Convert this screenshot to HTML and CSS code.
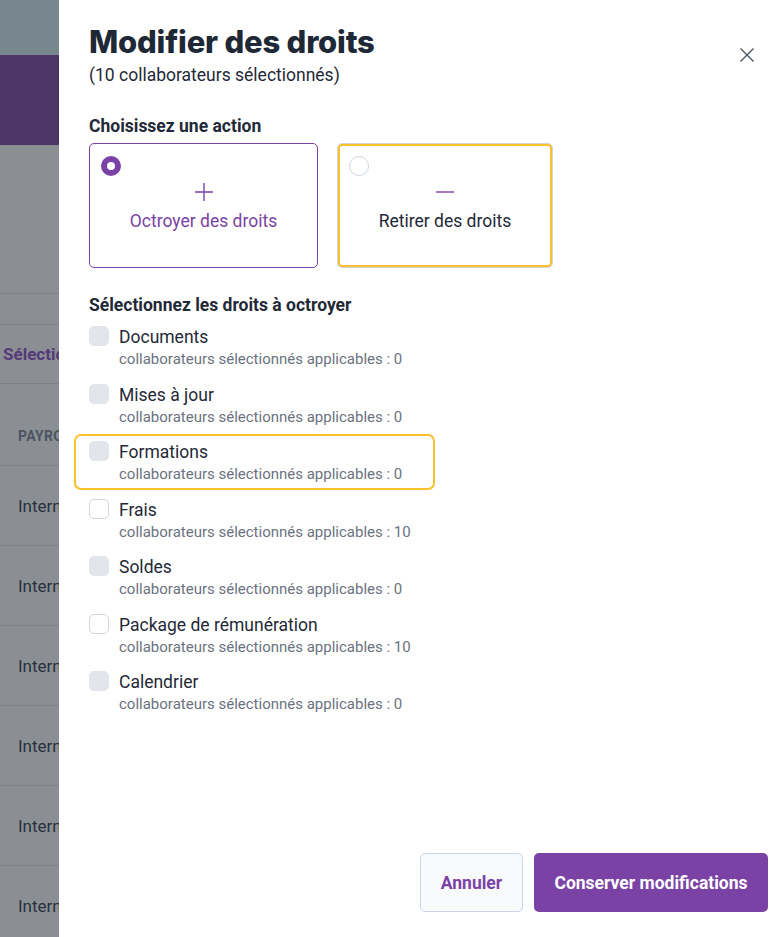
FILE: index.html
```html
<!DOCTYPE html>
<html lang="fr">
<head>
  <meta charset="UTF-8">
  <meta name="viewport" content="width=device-width, initial-scale=1.0">
  <title>Modifier des droits</title>
  <link rel="stylesheet" href="styles.css">
</head>
<body>
  <div class="app">
    <!-- page behind the drawer, dimmed by the overlay -->
    <div class="backdrop">
      <div class="bd-topbar"></div>
      <div class="bd-banner"></div>
      <div class="bd-blank"></div>
      <div class="bd-row bd-thin"></div>
      <div class="bd-row bd-select">Sélectionner</div>
      <div class="bd-row bd-head">PAYROLL</div>
      <div class="bd-row bd-cell">Interne</div>
      <div class="bd-row bd-cell">Interne</div>
      <div class="bd-row bd-cell">Interne</div>
      <div class="bd-row bd-cell">Interne</div>
      <div class="bd-row bd-cell">Interne</div>
      <div class="bd-row bd-cell">Interne</div>
    </div>

    <aside class="drawer">
      <header class="drawer-head">
        <div>
          <h1 class="drawer-title">Modifier des droits</h1>
          <p class="drawer-sub">(10 collaborateurs sélectionnés)</p>
        </div>
        <button class="close-btn" aria-label="Fermer">
          <svg width="16" height="16" viewBox="0 0 16 16"><path d="M1.5 1.5 L14.5 14.5 M14.5 1.5 L1.5 14.5" stroke="#4b5563" stroke-width="1.4" fill="none"/></svg>
        </button>
      </header>

      <section class="section">
        <h2 class="section-title">Choisissez une action</h2>
        <div class="cards">
          <label class="card card-on">
            <span class="radio radio-on"></span>
            <svg class="card-icon" width="18" height="18" viewBox="0 0 18 18"><path d="M9 0 V18 M0 9 H18" stroke="#7b42a5" stroke-width="1.4"/></svg>
            <span class="card-label">Octroyer des droits</span>
          </label>
          <label class="card card-focus">
            <span class="radio"></span>
            <svg class="card-icon" width="18" height="18" viewBox="0 0 18 18"><path d="M0 9 H18" stroke="#7b42a5" stroke-width="1.4"/></svg>
            <span class="card-label">Retirer des droits</span>
          </label>
        </div>
      </section>

      <section class="section rights">
        <h2 class="section-title">Sélectionnez les droits à octroyer</h2>
        <ul class="right-list">
          <li class="right"><span class="check check-off"></span><div><div class="right-name">Documents</div><div class="right-count">collaborateurs sélectionnés applicables : 0</div></div></li>
          <li class="right"><span class="check check-off"></span><div><div class="right-name">Mises à jour</div><div class="right-count">collaborateurs sélectionnés applicables : 0</div></div></li>
          <li class="right right-focus"><span class="check check-off"></span><div><div class="right-name">Formations</div><div class="right-count">collaborateurs sélectionnés applicables : 0</div></div></li>
          <li class="right"><span class="check"></span><div><div class="right-name">Frais</div><div class="right-count">collaborateurs sélectionnés applicables : 10</div></div></li>
          <li class="right"><span class="check check-off"></span><div><div class="right-name">Soldes</div><div class="right-count">collaborateurs sélectionnés applicables : 0</div></div></li>
          <li class="right"><span class="check"></span><div><div class="right-name">Package de rémunération</div><div class="right-count">collaborateurs sélectionnés applicables : 10</div></div></li>
          <li class="right"><span class="check check-off"></span><div><div class="right-name">Calendrier</div><div class="right-count">collaborateurs sélectionnés applicables : 0</div></div></li>
        </ul>
      </section>

      <footer class="drawer-foot">
        <button class="btn btn-ghost">Annuler</button>
        <button class="btn btn-main">Conserver modifications</button>
      </footer>
    </aside>
  </div>
</body>
</html>
```

FILE: styles.css
```css
body {
  margin: 0;
  height: 100vh;
  overflow: hidden;
  font-family: Roboto, 'Liberation Sans', sans-serif;
  font-size: 17.5px;
  color: #1f2937;
}
.app {
  display: flex;
  height: 100%;
}

/* dimmed page */
.backdrop {
  width: 59px;
  flex-shrink: 0;
  overflow: hidden;
  background: #8b8f94;
  white-space: nowrap;
}
.bd-topbar {
  height: 55px;
  background: #77878d;
}
.bd-banner {
  height: 90px;
  background: #4d3568;
}
.bd-blank {
  height: 148px;
  border-bottom: 1px solid #7d8288;
}
.bd-row {
  height: 79px;
  border-bottom: 1px solid #7d8288;
  display: flex;
  align-items: center;
  padding-left: 18px;
  font-size: 17px;
  color: #27323d;
}
.bd-thin {
  height: 30px;
}
.bd-select {
  height: 58px;
  padding-left: 3px;
  font-weight: bold;
  color: #553a78;
}
.bd-head {
  height: 82px;
  padding-top: 22px;
  box-sizing: border-box;
  font-size: 14px;
  font-weight: bold;
  color: #4b5561;
  letter-spacing: 0.3px;
}

/* drawer */
.drawer {
  flex: 1;
  background: #fff;
  display: flex;
  flex-direction: column;
  padding: 24px 15px 25px 30px;
}
.drawer-head {
  display: flex;
  justify-content: space-between;
  align-items: flex-start;
}
.drawer-title {
  margin: 0;
  font-family: Inter, 'Noto Sans', sans-serif;
  font-weight: 800;
  font-size: 31px;
  line-height: 36px;
  letter-spacing: -0.2px;
  color: #1e2836;
}
.drawer-sub {
  margin: 5px 0 0;
  font-size: 17.5px;
  line-height: 20px;
}
.close-btn {
  width: 30px;
  height: 30px;
  margin: 16px 6px 0 0;
  border: none;
  background: none;
  padding: 0;
  display: flex;
  align-items: center;
  justify-content: center;
  cursor: pointer;
}
.section {
  margin-top: 31px;
}
.section-title {
  margin: 0;
  font-size: 17.5px;
  line-height: 20px;
  font-weight: bold;
  color: #1f2937;
}
.cards {
  display: flex;
  gap: 19px;
  margin-top: 7px;
}
.card {
  box-sizing: border-box;
  height: 125px;
  width: 229px;
  border: 1px solid #d1d5db;
  border-radius: 5px;
  padding: 12px 11px;
  display: flex;
  flex-direction: column;
  align-items: center;
  cursor: pointer;
}
.card-on {
  border-color: #7b42a5;
}
.card-on .card-label {
  color: #7b42a5;
}
.card-focus {
  width: 216px;
  box-shadow: inset 0 0 0 2px #fbc02d;
}
.radio {
  align-self: flex-start;
  box-sizing: border-box;
  width: 20px;
  height: 20px;
  border-radius: 50%;
  border: 1px solid #cbd5e1;
}
.radio-on {
  border: 6px solid #7b42a5;
}
.card-icon {
  margin-top: 7px;
}
.card-label {
  margin-top: 9px;
  line-height: 22px;
}
.rights {
  margin-top: 27px;
}
.right-list {
  list-style: none;
  margin: 4px 0 0 -15px;
  padding: 0;
  display: flex;
  flex-direction: column;
  align-items: flex-start;
  gap: 1.5px;
}
.right {
  display: flex;
  gap: 10px;
  padding: 7px 33px 6px 15px;
  border-radius: 7px;
}
.right-focus {
  box-shadow: inset 0 0 0 2px #fbc02d;
}
.check {
  box-sizing: border-box;
  width: 20px;
  height: 20px;
  border-radius: 5px;
  border: 1px solid #cfd5dd;
  background: #fff;
  flex-shrink: 0;
}
.check-off {
  border-color: #e2e5ea;
  background: #e2e5ea;
}
.right-name {
  line-height: 22px;
}
.right-count {
  padding-top: 1px;
  font-size: 15px;
  line-height: 20px;
  color: #6b7280;
}
.drawer-foot {
  margin-top: auto;
  display: flex;
  justify-content: flex-end;
  gap: 11px;
}
.btn {
  height: 59px;
  border-radius: 5px;
  font-family: Roboto, sans-serif;
  font-size: 17.5px;
  font-weight: bold;
  cursor: pointer;
}
.btn-ghost {
  width: 103px;
  background: #f8fafc;
  border: 1px solid #cbd5e1;
  color: #7b42a5;
}
.btn-main {
  width: 234px;
  background: #7b42a5;
  border: none;
  color: #fff;
}
```
